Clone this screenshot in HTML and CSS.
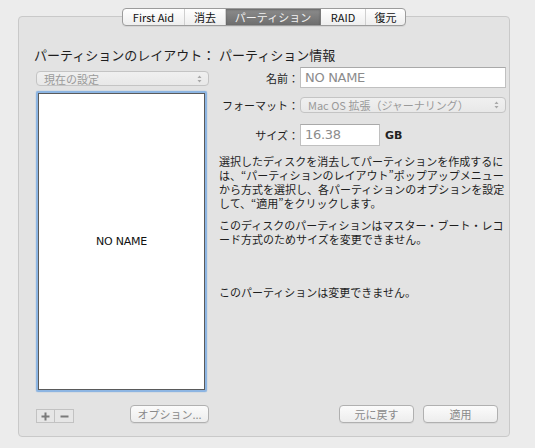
FILE: index.html
```html
<!DOCTYPE html>
<html lang="ja">
<head>
<meta charset="utf-8">
<link rel="stylesheet" href="styles.css">
</head>
<body>
<div class="window">
  <div class="tabs">
    <div class="tab t1">First Aid</div>
    <div class="tab t2">消去</div>
    <div class="tab t3 selected">パーティション</div>
    <div class="tab t4">RAID</div>
    <div class="tab t5 last">復元</div>
  </div>
  <div class="panel">
    <div class="left">
      <div class="section-title">パーティションのレイアウト：</div>
      <div class="popup layout-popup">
        <span>現在の設定</span>
        <svg class="updown" width="5" height="8" viewBox="0 0 5 8"><path d="M2.5 0.5 L4.5 3 L0.5 3 Z M2.5 7.5 L4.5 5 L0.5 5 Z" fill="#a8a8a8"/></svg>
      </div>
      <div class="list">
        <div class="list-inner">NO NAME</div>
      </div>
      <div class="left-bottom">
        <div class="pm">
          <div class="pm-btn">
            <svg width="9" height="9" viewBox="0 0 9 9"><path d="M4.5 0.5 V8.5 M0.5 4.5 H8.5" stroke="#7a7a7a" stroke-width="2"/></svg>
          </div>
          <div class="pm-btn">
            <svg width="9" height="9" viewBox="0 0 9 9"><path d="M0.5 4.5 H8.5" stroke="#7a7a7a" stroke-width="2"/></svg>
          </div>
        </div>
        <div class="button options">オプション...</div>
      </div>
    </div>
    <div class="right">
      <div class="section-title">パーティション情報</div>
      <div class="form-row row-name">
        <div class="label">名前：</div>
        <div class="field name-field">NO NAME</div>
      </div>
      <div class="form-row row-format">
        <div class="label">フォーマット：</div>
        <div class="popup format-popup">
          <span>Mac OS 拡張（ジャーナリング）</span>
          <svg class="updown" width="5" height="8" viewBox="0 0 5 8"><path d="M2.5 0.5 L4.5 3 L0.5 3 Z M2.5 7.5 L4.5 5 L0.5 5 Z" fill="#a8a8a8"/></svg>
        </div>
      </div>
      <div class="form-row row-size">
        <div class="label">サイズ：</div>
        <div class="field size-field">16.38</div>
        <div class="unit">GB</div>
      </div>
      <p class="info p1">選択したディスクを消去してパーティションを作成するには、“パーティションのレイアウト”ポップアップメニューから方式を選択し、各パーティションのオプションを設定して、“適用”をクリックします。</p>
      <p class="info p2">このディスクのパーティションはマスター・ブート・レコード方式のためサイズを変更できません。</p>
      <p class="info p3">このパーティションは変更できません。</p>
      <div class="actions">
        <div class="button action">元に戻す</div>
        <div class="button action">適用</div>
      </div>
    </div>
  </div>
</div>
</body>
</html>
```
FILE: styles.css
```css
* { box-sizing: border-box; }
html, body { margin: 0; padding: 0; }
body {
  width: 535px;
  height: 448px;
  overflow: hidden;
  background: #ececec;
  font-family: "Noto Sans CJK JP", "DejaVu Sans", sans-serif;
  font-size: 11px;
  color: #222;
}
.window { padding-top: 8px; }

.tabs {
  position: relative;
  z-index: 1;
  display: flex;
  width: 284px;
  height: 18px;
  margin: 0 0 0 122px;
  border: 1px solid #9c9c9c;
  border-radius: 4px;
  background: linear-gradient(#ffffff, #eeeeee);
  overflow: hidden;
  box-shadow: 0 1px 0 rgba(0,0,0,0.06);
}
.tab {
  display: flex;
  align-items: center;
  justify-content: center;
  font-size: 11px;
  line-height: 16px;
  color: #111;
  border-right: 1px solid #cfcfcf;
}
.tab.last { border-right: none; }
.t1 { width: 62px; }
.t2 { width: 41px; }
.t3 { width: 95px; }
.t4 { width: 45px; }
.t5 { width: 39px; }
.tab.selected {
  background: linear-gradient(#8c8c8c, #6e6e6e);
  color: #f2f2f2;
  border-right: 1px solid #7a7a7a;
  box-shadow: inset 0 1px 2px rgba(0,0,0,0.25);
}

.panel {
  display: flex;
  width: 492px;
  height: 421px;
  margin: -10px 0 0 18px;
  padding: 30px 0 13px 15px;
  border: 1px solid #c9c9c9;
  border-radius: 4px;
  background: #e3e3e3;
}
.section-title {
  font-size: 13px;
  line-height: 16px;
  height: 16px;
  color: #1e1e1e;
  white-space: nowrap;
}

.left {
  width: 175px;
  display: flex;
  flex-direction: column;
}
.popup {
  display: flex;
  align-items: center;
  justify-content: space-between;
  border: 1px solid #c4c4c4;
  border-radius: 4px;
  background: linear-gradient(#f0f0f0, #e8e8e8);
  color: #9a9a9a;
  white-space: nowrap;
}
.layout-popup {
  width: 173px;
  height: 15px;
  margin: 8px 0 0 2px;
  padding: 0 6px 0 7px;
  font-size: 11px;
}
.list {
  width: 171px;
  height: 301px;
  margin: 5px 0 0 2px;
  border: 2px solid #8db5e2;
  border-radius: 2px;
  box-shadow: 0 0 1px #5f95d6;
}
.list-inner {
  height: 100%;
  background: #fff;
  border: 1px solid #5a5a5a;
  display: flex;
  align-items: center;
  justify-content: center;
  font-size: 11px;
  color: #111;
  font-family: "DejaVu Sans", sans-serif;
  letter-spacing: -0.2px;
}
.left-bottom {
  display: flex;
  align-items: flex-start;
  margin-top: 13px;
  height: 18px;
}
.pm {
  display: flex;
  margin: 4px 0 0 2px;
}
.pm-btn {
  width: 19px;
  height: 14px;
  border: 1px solid #c2c2c2;
  background: #e6e6e6;
  display: flex;
  align-items: center;
  justify-content: center;
}
.pm-btn + .pm-btn { border-left: none; }
.button {
  display: flex;
  align-items: center;
  justify-content: center;
  height: 18px;
  border: 1px solid #b0b0b0;
  border-radius: 4px;
  background: linear-gradient(#fbfbfb, #ededed);
  color: #8a8a8a;
  font-size: 11px;
  box-shadow: 0 1px 0 rgba(0,0,0,0.05);
}
.options {
  width: 82px;
  margin-left: 56px;
}

.right {
  width: 287px;
  margin-left: 10px;
  display: flex;
  flex-direction: column;
}
.form-row {
  display: flex;
  align-items: center;
}
.label {
  width: 80px;
  margin-right: 1px;
  text-align: right;
  white-space: nowrap;
  font-size: 11px;
  color: #1e1e1e;
}
.row-name { margin-top: 4px; height: 21px; }
.row-format { margin-top: 9px; height: 16px; }
.row-size { margin-top: 11px; height: 22px; }
.field {
  height: 100%;
  background: #fff;
  border: 1px solid #c0c0c0;
  border-top-color: #a9a9a9;
  color: #8c8c8c;
  font-size: 13px;
  line-height: 19px;
  padding-left: 4px;
  font-family: "DejaVu Sans", sans-serif;
  letter-spacing: -0.3px;
}
.name-field { width: 206px; }
.size-field { width: 80px; line-height: 20px; }
.unit {
  margin-left: 5px;
  font-size: 11px;
  font-weight: bold;
  color: #222;
  font-family: "DejaVu Sans", sans-serif;
}
.format-popup {
  width: 206px;
  height: 16px;
  padding: 0 6px 0 7px;
  font-size: 11px;
}
.info {
  margin: 0;
  font-size: 11px;
  line-height: 14px;
  color: #1e1e1e;
  width: 290px;
}
.p1 { margin-top: 8px; }
.p2 { margin-top: 8px; }
.p3 { margin-top: 39px; }
.actions {
  margin-top: auto;
  display: flex;
  justify-content: flex-end;
  gap: 9px;
  padding-right: 8px;
}
.action { width: 75px; }
```
